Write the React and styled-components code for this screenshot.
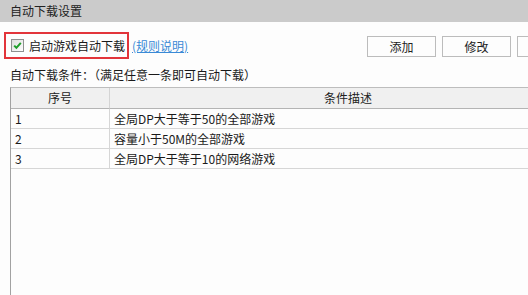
import styled, { createGlobalStyle } from 'styled-components'

const GlobalStyle = createGlobalStyle`
    html, body {
        margin: 0;
        padding: 0;
        overflow: hidden;
        background: #fdfdfd;
    }
    body {
        font-family: "Noto Sans CJK SC", "Liberation Sans", sans-serif;
        font-size: 12px;
        color: #1a1a1a;
    }
`

const rules = [
    { id: 1, text: '全局DP大于等于50的全部游戏' },
    { id: 2, text: '容量小于50M的全部游戏' },
    { id: 3, text: '全局DP大于等于10的网络游戏' },
]

function CheckIcon() {
    return (
        <svg width="13" height="13" viewBox="0 0 13 13">
            <defs>
                <linearGradient id="cbg" x1="0" y1="0" x2="1" y2="1">
                    <stop offset="0" stopColor="#dcdcdc" />
                    <stop offset="1" stopColor="#ffffff" />
                </linearGradient>
            </defs>
            <rect x="0.5" y="0.5" width="12" height="12" fill="url(#cbg)" stroke="#8e8f8f" />
            <path d="M3.2 6.6 L5.4 8.8 L9.8 3.8" fill="none" stroke="#1f9e2a" strokeWidth="2" />
        </svg>
    )
}

function App() {
    return (
        <>
            <GlobalStyle />
            <Frame>
                <TitleBar>自动下载设置</TitleBar>
                <Toolbar>
                    <Highlight>
                        <CheckIcon />
                        <span>启动游戏自动下载</span>
                    </Highlight>
                    <HelpLink href="#">(规则说明)</HelpLink>
                    <Buttons>
                        <Button>添加</Button>
                        <Button>修改</Button>
                        <Button>删除</Button>
                    </Buttons>
                </Toolbar>
                <Caption>自动下载条件：（满足任意一条即可自动下载）</Caption>
                <Table>
                    <HeadCell>序号</HeadCell>
                    <HeadCell $last>条件描述</HeadCell>
                    {rules.map((r) => (
                        <Row key={r.id}>
                            <Cell>{r.id}</Cell>
                            <Cell $last>{r.text}</Cell>
                        </Row>
                    ))}
                </Table>
            </Frame>
        </>
    )
}
export default App

const Frame = styled.div`
    width: 596px;
    height: 295px;
    display: flex;
    flex-direction: column;
`

const TitleBar = styled.div`
    height: 22px;
    line-height: 22px;
    padding-left: 10px;
    background: #cbcbcb;
    color: #222;
`

const Toolbar = styled.div`
    display: flex;
    align-items: flex-start;
    padding: 10px 10px 0 4px;
`

const Highlight = styled.div`
    box-sizing: border-box;
    height: 27px;
    width: 125px;
    border: 2px solid #e2343a;
    display: flex;
    align-items: center;
    gap: 5px;
    padding-left: 5px;
    white-space: nowrap;
    svg {
        flex: none;
    }
`

const HelpLink = styled.a`
    margin: 7px 0 0 3px;
    line-height: 14px;
    color: #3a8ad6;
    text-decoration: underline;
    white-space: nowrap;
`

const Buttons = styled.div`
    margin: 4px 0 0 auto;
    display: flex;
    gap: 6px;
`

const Button = styled.button`
    box-sizing: border-box;
    width: 69px;
    height: 21px;
    padding: 0;
    border: 1px solid #bcbcbc;
    background: #fdfdfd;
    font-family: inherit;
    font-size: 12px;
    color: #222;
`

const Caption = styled.div`
    margin: 8px 0 4px 10px;
    line-height: 16px;
`

const Table = styled.div`
    flex: 1;
    margin-left: 10px;
    margin-right: 10px;
    border-top: 1px solid #bdbdbd;
    border-left: 1px solid #a2a2a2;
    display: grid;
    grid-template-columns: 99px 1fr;
    grid-auto-rows: max-content;
    align-content: start;
`

const HeadCell = styled.div`
    height: 20px;
    line-height: 20px;
    text-align: center;
    background: #f0f0f0;
    border-bottom: 1px solid #b4b4b4;
    border-right: ${(p) => (p.$last ? 'none' : '1px solid #d4d4d4')};
    color: #222;
`

const Row = styled.div`
    display: contents;
`

const Cell = styled.div`
    height: 19px;
    line-height: 19px;
    padding-left: 4px;
    border-bottom: 1px solid #d6d6d6;
    border-right: ${(p) => (p.$last ? 'none' : '1px solid #d6d6d6')};
    white-space: nowrap;
`
